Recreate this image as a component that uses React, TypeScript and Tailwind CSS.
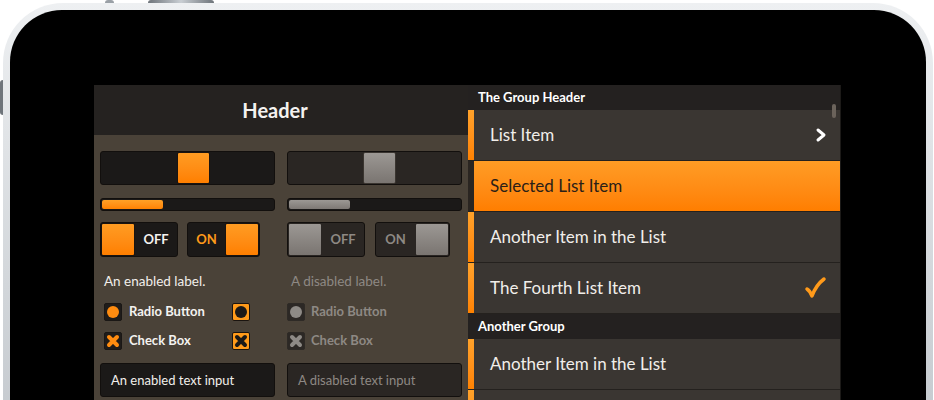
import type { ReactNode } from "react";

const font = { fontFamily: "Lato, 'Open Sans', sans-serif" };

function XMark({ color }: { color: string }) {
  return (
    <svg width="14" height="14" viewBox="0 0 14 14">
      <path d="M3 3 L11 11 M11 3 L3 11" stroke={color} strokeWidth="4" strokeLinecap="round" />
    </svg>
  );
}

function Slider({ disabled, thumbLeft }: { disabled?: boolean; thumbLeft: number }) {
  return (
    <div
      className={
        "relative h-[34px] w-[175px] rounded-[3px] border border-[#120f0d] " +
        (disabled ? "bg-[#2a2623]" : "bg-[#1b1918]")
      }
    >
      <div
        className={
          "absolute top-0 h-[32px] w-[33px] rounded-[2px] border " +
          (disabled
            ? "border-[#3a3530] bg-gradient-to-b from-[#9c9894] to-[#7a7571]"
            : "border-[#1a1410] bg-gradient-to-b from-[#ff9c22] to-[#ff7f00]")
        }
        style={{ left: thumbLeft }}
      />
    </div>
  );
}

function Progress({ disabled }: { disabled?: boolean }) {
  return (
    <div className="h-[13px] w-[175px] rounded-[3px] border border-[#120f0d] bg-[#1b1918] p-px">
      <div
        className={
          "h-full w-[61px] rounded-[2px] " +
          (disabled ? "bg-gradient-to-b from-[#9c9894] to-[#7e7975]" : "bg-gradient-to-b from-[#ffa126] to-[#ff8200]")
        }
      />
    </div>
  );
}

function Knob({ disabled }: { disabled?: boolean }) {
  return (
    <div
      className={
        "h-full w-[34px] rounded-[2px] border " +
        (disabled
          ? "border-[#2a2623] bg-gradient-to-b from-[#9c9894] to-[#7a7571]"
          : "border-[#1a1410] bg-gradient-to-b from-[#ff9c22] to-[#ff7f00]")
      }
    />
  );
}

function Toggle({ on, disabled, width }: { on?: boolean; disabled?: boolean; width: string }) {
  const text = disabled ? "text-[#8e8984]" : on ? "text-[#ff9a1a]" : "text-[#f4f2f0]";
  return (
    <div
      className={
        "flex h-[35px] items-stretch rounded-[3px] border border-[#120f0d] " +
        width +
        (disabled ? " bg-[#2a2623]" : " bg-[#1b1918]")
      }
    >
      {!on && <Knob disabled={disabled} />}
      <div className={"flex flex-1 items-center justify-center text-[13px] font-bold " + text}>
        {on ? "ON" : "OFF"}
      </div>
      {on && <Knob disabled={disabled} />}
    </div>
  );
}

function Box({ filled, disabled, children }: { filled?: boolean; disabled?: boolean; children: ReactNode }) {
  return (
    <div
      className={
        "flex h-[18px] w-[18px] items-center justify-center rounded-[2px] border " +
        (filled ? "border-[#1a1410] bg-[#ff9a1a]" : disabled ? "border-[#2e2a26] bg-[#2c2825]" : "border-[#1a1715] bg-[#1f1c1a]")
      }
    >
      {children}
    </div>
  );
}

function Dot({ color }: { color: string }) {
  return <div className={"h-[12px] w-[12px] rounded-full " + color} />;
}

function ListItem({ label, accessory, selected }: { label: string; accessory?: ReactNode; selected?: boolean }) {
  return (
    <div className="flex h-[51px] border-b border-[#24211e]">
      <div className={"w-[6px] " + (selected ? "bg-[#2a2521]" : "bg-gradient-to-b from-[#ffa22a] to-[#ff8200]")} />
      <div
        className={
          "flex flex-1 items-center justify-between pl-[16px] pr-[12px] text-[17px] " +
          (selected
            ? "bg-gradient-to-b from-[#ff9c24] to-[#ff7e00] text-[#2b2017]"
            : "bg-[#3a3632] text-[#f1eeea]")
        }
      >
        <span>{label}</span>
        {accessory}
      </div>
    </div>
  );
}

function GroupHeader({ label }: { label: string }) {
  return (
    <div className="flex h-[25px] items-center bg-[#242120] px-[10px] text-[13px] font-bold text-white">{label}</div>
  );
}

export default function App() {
  return (
    <div className="h-[400px] overflow-hidden bg-white" style={font}>
      <div className="relative ml-[3px] mt-[3px] w-[930px]">
        <div className="absolute -top-[3px] left-[102px] h-[3px] w-[9px] rounded-t-sm bg-[#9aa0a6]" />
        <div className="absolute -top-[3px] left-[145px] h-[3px] w-[66px] rounded-t-sm bg-gradient-to-r from-[#6f757b] via-[#c9ced3] to-[#6f757b]" />
        <div className="absolute -left-[3px] top-[77px] h-[35px] w-[3px] rounded-l-sm bg-[#6f757b]" />
        <div className="rounded-t-[60px] bg-gradient-to-b from-[#eef0f2] to-[#c4c9ce] px-[7px] pt-[7px]">
          <div className="h-[420px] rounded-t-[52px] bg-black pl-[84px] pt-[75px]">
            <div className="flex w-[747px]">
              <div className="w-[374px] bg-[#4a4238]">
                <div className="flex h-[50px] items-center justify-center bg-[#252220] pr-[12px] text-[20px] font-bold text-[#f4f2f0]">
                  Header
                </div>
                <div className="grid grid-cols-2 gap-x-[12px] pl-[6px] pr-[6px] pt-[16px]">
                  <div className="flex flex-col">
                    <Slider thumbLeft={76} />
                    <div className="mt-[13px]">
                      <Progress />
                    </div>
                    <div className="mt-[11px] flex gap-[9px]">
                      <Toggle width="w-[78px]" />
                      <Toggle on width="w-[73px]" />
                    </div>
                    <div className="mt-[14px] pl-[4px] text-[13.5px] text-[#f2efeb]">An enabled label.</div>
                    <div className="mt-[11px] flex items-center pl-[4px]">
                      <Box>
                        <Dot color="bg-[#ff8c10]" />
                      </Box>
                      <span className="ml-[7px] text-[13px] font-bold text-[#f4f2f0]">Radio Button</span>
                      <div className="ml-auto mr-[25px]">
                        <Box filled>
                          <Dot color="bg-[#1b1918]" />
                        </Box>
                      </div>
                    </div>
                    <div className="mt-[9px] flex items-center pl-[4px]">
                      <Box>
                        <XMark color="#ff8c10" />
                      </Box>
                      <span className="ml-[7px] text-[13px] font-bold text-[#f4f2f0]">Check Box</span>
                      <div className="ml-auto mr-[25px]">
                        <Box filled>
                          <XMark color="#1b1918" />
                        </Box>
                      </div>
                    </div>
                    <div className="mt-[13px] flex h-[34px] items-center rounded-[3px] border border-[#120f0d] bg-[#1b1918] pl-[10px] text-[13px] text-[#f2efeb]">
                      An enabled text input
                    </div>
                  </div>
                  <div className="flex flex-col">
                    <Slider disabled thumbLeft={75} />
                    <div className="mt-[13px]">
                      <Progress disabled />
                    </div>
                    <div className="mt-[11px] flex gap-[10px]">
                      <Toggle disabled width="w-[78px]" />
                      <Toggle on disabled width="w-[75px]" />
                    </div>
                    <div className="mt-[14px] pl-[4px] text-[13.5px] text-[#8e8984]">A disabled label.</div>
                    <div className="mt-[11px] flex items-center">
                      <Box disabled>
                        <Dot color="bg-[#8e8a86]" />
                      </Box>
                      <span className="ml-[6px] text-[13px] font-bold text-[#8e8984]">Radio Button</span>
                    </div>
                    <div className="mt-[9px] flex items-center">
                      <Box disabled>
                        <XMark color="#8e8a86" />
                      </Box>
                      <span className="ml-[6px] text-[13px] font-bold text-[#8e8984]">Check Box</span>
                    </div>
                    <div className="mt-[13px] flex h-[34px] items-center rounded-[3px] border border-[#120f0d] bg-[#2a2623] pl-[10px] text-[13px] text-[#8e8984]">
                      A disabled text input
                    </div>
                  </div>
                </div>
              </div>
              <div className="relative w-[373px] border-r border-[#1c1a18] bg-[#2a2521]">
                <div className="absolute right-[4px] top-[19px] h-[14px] w-[4px] rounded-full bg-[#6b635b]" />
                <GroupHeader label="The Group Header" />
                <ListItem
                  label="List Item"
                  accessory={
                    <svg width="14" height="16" viewBox="0 0 14 16">
                      <path d="M4 3 L10 8 L4 13" fill="none" stroke="#fff" strokeWidth="3" strokeLinejoin="round" strokeLinecap="round" />
                    </svg>
                  }
                />
                <ListItem label="Selected List Item" selected />
                <ListItem label="Another Item in the List" />
                <ListItem
                  label="The Fourth List Item"
                  accessory={
                    <svg width="24" height="24" viewBox="0 0 24 24" className="mr-[1px]">
                      <path d="M4 13 Q7 15 9 20 Q13 9 21 3" fill="none" stroke="#ff9a1a" strokeWidth="3.5" strokeLinecap="round" strokeLinejoin="round" />
                    </svg>
                  }
                />
                <GroupHeader label="Another Group" />
                <ListItem label="Another Item in the List" />
                <ListItem label="" />
              </div>
            </div>
          </div>
        </div>
      </div>
    </div>
  );
}
